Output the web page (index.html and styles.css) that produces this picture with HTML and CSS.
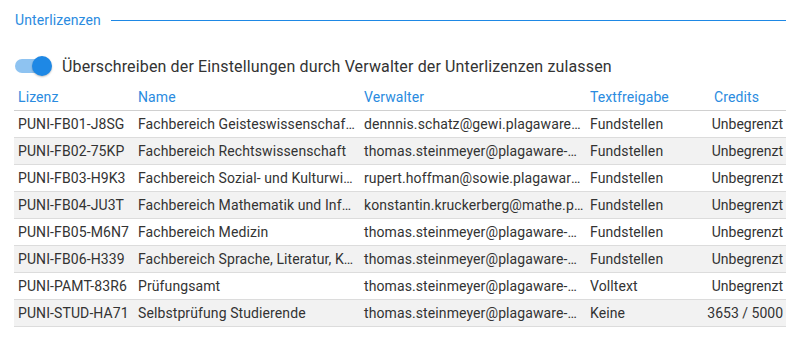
FILE: index.html
```html
<!DOCTYPE html>
<html lang="de">
<head>
<meta charset="utf-8">
<title>Unterlizenzen</title>
<link rel="stylesheet" href="styles.css">
</head>
<body>
<section class="panel">
  <div class="legend"><span class="legend-text">Unterlizenzen</span><span class="legend-line"></span></div>
  <label class="switch-row">
    <span class="switch"><span class="track"></span><span class="thumb"></span></span>
    <span class="switch-label">Überschreiben der Einstellungen durch Verwalter der Unterlizenzen zulassen</span>
  </label>
  <table class="grid">
    <colgroup>
      <col class="c1"><col class="c2"><col class="c3"><col class="c4"><col class="c5">
    </colgroup>
    <thead>
      <tr><th>Lizenz</th><th>Name</th><th>Verwalter</th><th>Textfreigabe</th><th class="credits-head">Credits</th></tr>
    </thead>
    <tbody>
      <tr><td>PUNI-FB01-J8SG</td><td>Fachbereich Geisteswissenschaften</td><td>dennnis.schatz@gewi.plagaware-uni.de</td><td>Fundstellen</td><td class="num">Unbegrenzt</td></tr>
      <tr><td>PUNI-FB02-75KP</td><td>Fachbereich Rechtswissenschaft</td><td>thomas.steinmeyer@plagaware-uni.de</td><td>Fundstellen</td><td class="num">Unbegrenzt</td></tr>
      <tr><td>PUNI-FB03-H9K3</td><td>Fachbereich Sozial- und Kulturwissenschaften</td><td>rupert.hoffman@sowie.plagaware-uni.de</td><td>Fundstellen</td><td class="num">Unbegrenzt</td></tr>
      <tr><td>PUNI-FB04-JU3T</td><td>Fachbereich Mathematik und Informatik</td><td>konstantin.kruckerberg@mathe.plagaware-uni.de</td><td>Fundstellen</td><td class="num">Unbegrenzt</td></tr>
      <tr><td>PUNI-FB05-M6N7</td><td>Fachbereich Medizin</td><td>thomas.steinmeyer@plagaware-uni.de</td><td>Fundstellen</td><td class="num">Unbegrenzt</td></tr>
      <tr><td>PUNI-FB06-H339</td><td>Fachbereich Sprache, Literatur, Kultur</td><td>thomas.steinmeyer@plagaware-uni.de</td><td>Fundstellen</td><td class="num">Unbegrenzt</td></tr>
      <tr><td>PUNI-PAMT-83R6</td><td>Prüfungsamt</td><td>thomas.steinmeyer@plagaware-uni.de</td><td>Volltext</td><td class="num">Unbegrenzt</td></tr>
      <tr><td>PUNI-STUD-HA71</td><td>Selbstprüfung Studierende</td><td>thomas.steinmeyer@plagaware-uni.de</td><td>Keine</td><td class="num">3653 / 5000</td></tr>
    </tbody>
  </table>
</section>
</body>
</html>
```

FILE: styles.css
```css
html, body {
  margin: 0;
  padding: 0;
  background: #ffffff;
}
body {
  font-family: Roboto, "Liberation Sans", Arial, sans-serif;
  color: #333333;
}
.panel {
  padding: 10px 15px 0 14px;
}
.legend {
  display: flex;
  align-items: center;
  height: 20px;
}
.legend-text {
  font-size: 14px;
  letter-spacing: 0.12px;
  color: #2a8be0;
  padding-left: 1px;
  margin-right: 10px;
}
.legend-line {
  flex: 1;
  height: 1px;
  background: #1e88e5;
}
.switch-row {
  display: flex;
  align-items: center;
  height: 20px;
  margin-top: 26px;
}
.switch {
  position: relative;
  width: 38px;
  height: 20px;
  margin-left: 1px;
  margin-right: 9px;
  flex: none;
}
.track {
  position: absolute;
  left: 0;
  top: 3px;
  width: 34px;
  height: 14px;
  border-radius: 7px;
  background: #8ec3f1;
}
.thumb {
  position: absolute;
  left: 17px;
  top: 0;
  width: 20px;
  height: 20px;
  border-radius: 50%;
  background: #1e88e5;
  box-shadow: 0 1px 2px rgba(0,0,0,0.25);
}
.switch-label {
  font-size: 16px;
  letter-spacing: 0.14px;
  color: #333333;
}
.grid {
  margin-top: 8px;
  width: 772px;
  table-layout: fixed;
  border-collapse: collapse;
  font-size: 14px;
  letter-spacing: 0.1px;
}
.c1 { width: 120px; }
.c2 { width: 226px; }
.c3 { width: 226px; }
.c4 { width: 120px; }
.c5 { width: 80px; }
.grid th {
  text-align: left;
  font-weight: normal;
  color: #2a8be0;
  height: 26px;
  padding: 0 4px;
  border-bottom: 1px solid #d0d0d0;
  line-height: 26px;
}
.grid th.credits-head {
  padding-left: 8px;
}
.grid td {
  height: 26px;
  padding: 0 2px 0 4px;
  line-height: 26px;
  border-bottom: 1px solid #dcdcdc;
  white-space: nowrap;
  overflow: hidden;
  text-overflow: ellipsis;
  color: #333333;
}
.grid tbody tr:nth-child(even) td {
  background: #f2f2f2;
}
.grid td.num {
  text-align: right;
  padding: 0 3px 0 0;
  letter-spacing: 0;
  text-overflow: clip;
}
```
